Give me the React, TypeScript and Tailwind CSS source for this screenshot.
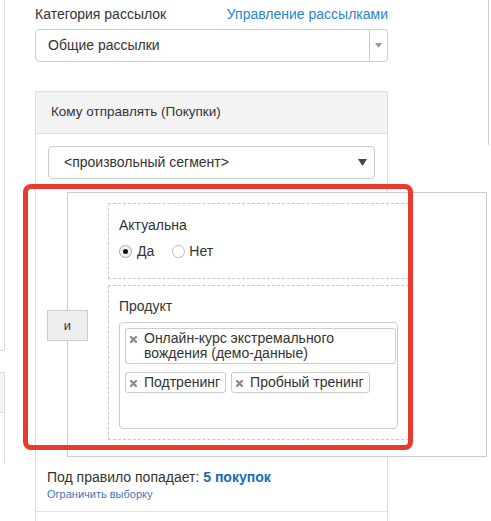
import React from "react";

function Tag({ children }: { children: React.ReactNode }) {
  return (
    <div className="flex items-start rounded-[3px] border border-[#cccccc] bg-white py-[2px] pl-[4px] pr-[5px] text-[14px] leading-[15px] text-[#333]">
      <svg width="7" height="7" viewBox="0 0 7 7" className="mt-[5px] shrink-0">
        <path d="M1 1 L6 6 M6 1 L1 6" stroke="#888" strokeWidth="2.2" strokeLinecap="round" />
      </svg>
      <span className="ml-[7px]">{children}</span>
    </div>
  );
}

export default function App() {
  return (
    <div
      className="relative flex h-[521px] w-[491px] overflow-hidden bg-white text-[#333]"
      style={{ fontFamily: '"Liberation Sans", Arial, sans-serif' }}
    >
      {/* cut-off left panel */}
      <div className="flex w-[5px] shrink-0 flex-col">
        <div className="h-[351px] border-b border-r border-[#dddddd]" />
        <div className="h-[21px]" />
        <div className="h-[41px] border-y border-r border-[#dddddd] bg-[#f5f5f5]" />
        <div className="h-[50px] border-r border-[#dddddd]" />
      </div>

      {/* main column */}
      <div className="ml-[30px] flex w-[353px] shrink-0 flex-col">
        <div className="mt-[4px] flex h-[20px] items-center justify-between text-[14px]">
          <span className="text-[#333]">Категория рассылок</span>
          <span className="text-[#2a85d0]">Управление рассылками</span>
        </div>

        <div className="mt-[5px] flex h-[33px] rounded-[4px] border border-[#cccccc]">
          <div className="flex flex-1 items-center pl-[12px] text-[14px] text-[#333]">Общие рассылки</div>
          <div className="flex w-[18px] items-center justify-center border-l border-[#cccccc]">
            <svg width="7" height="5" viewBox="0 0 7 5">
              <path d="M0 0 H7 L3.5 5 Z" fill="#999" />
            </svg>
          </div>
        </div>

        <div className="mt-[29px] flex flex-1 flex-col border-x border-t border-[#dddddd]">
          <div className="flex h-[42px] items-center border-b border-[#dddddd] bg-[#f3f3f3] pl-[15px] text-[13.5px] text-[#333]">
            Кому отправлять (Покупки)
          </div>

          <div className="mx-[12px] mt-[12px] flex h-[33px] items-center justify-between rounded-[4px] border border-[#cccccc] pl-[15px] pr-[7px] text-[14px] text-[#333]">
            <span>&lt;произвольный сегмент&gt;</span>
            <svg width="9" height="7" viewBox="0 0 9 7">
              <path d="M0 0 H9 L4.5 7 Z" fill="#444" />
            </svg>
          </div>

          {/* "и" group */}
          <div className="relative z-10 ml-[31px] mt-[13px] flex h-[265px] w-[420px] flex-col gap-[6px] border border-[#cccccc] bg-white pb-[16px] pl-[40px] pt-[10px]">
            <div className="absolute left-[-21px] top-[117px] flex h-[31px] w-[41px] items-center justify-center border border-[#cccccc] bg-[#eeeeee] text-[13px] text-[#333]">
              и
            </div>

            <div className="h-[76px] w-[301px] border border-dashed border-[#c8c8c8] pl-[10px] pt-[11px]">
              <div className="h-[20px] text-[14px] leading-[20px]">Актуальна</div>
              <div className="mt-[6px] flex h-[20px] items-center text-[14px]">
                <span className="flex h-[13px] w-[13px] items-center justify-center rounded-full border border-[#aaaaaa] bg-[#f0f0f0]">
                  <span className="h-[5px] w-[5px] rounded-full bg-[#111]" />
                </span>
                <span className="ml-[5px]">Да</span>
                <span className="ml-[18px] h-[13px] w-[13px] rounded-full border border-[#bbbbbb] bg-white" />
                <span className="ml-[4px]">Нет</span>
              </div>
            </div>

            <div className="flex w-[301px] flex-1 flex-col border border-dashed border-[#c8c8c8] pb-[10px] pl-[10px] pt-[10px]">
              <div className="h-[20px] text-[14px] leading-[20px]">Продукт</div>
              <div className="mt-[6px] flex w-[279px] flex-1 flex-wrap content-start gap-x-[5px] gap-y-[8px] rounded-[4px] border border-[#cccccc] pl-[5px] pr-[1px] pt-[5px]">
                <div className="w-[271px]">
                  <Tag>
                    Онлайн-курс экстремального
                    <br />
                    вождения (демо-данные)
                  </Tag>
                </div>
                <Tag>Подтренинг</Tag>
                <Tag>Пробный тренинг</Tag>
              </div>
            </div>
          </div>

          <div className="mt-[11px] pl-[11px] text-[14px] leading-[18px] text-[#333]">
            Под правило попадает: <span className="font-bold text-[#1b6bb3]">5 покупок</span>
          </div>
          <div className="pl-[11px] text-[11px] leading-[16px] text-[#3a78c0]">Ограничить выборку</div>
          <div className="mt-[9px] border-t border-[#e3e3e3]" />
        </div>
      </div>

      {/* scrollbar hint */}
      <div className="absolute right-[2px] top-0 h-[145px] w-[1px] bg-[#cccccc]" />

      {/* red annotation */}
      <div className="pointer-events-none absolute left-[23px] top-[184px] z-20 h-[266px] w-[390px] rounded-[8px] border-[5px] border-[#e63b2e]" />
    </div>
  );
}
